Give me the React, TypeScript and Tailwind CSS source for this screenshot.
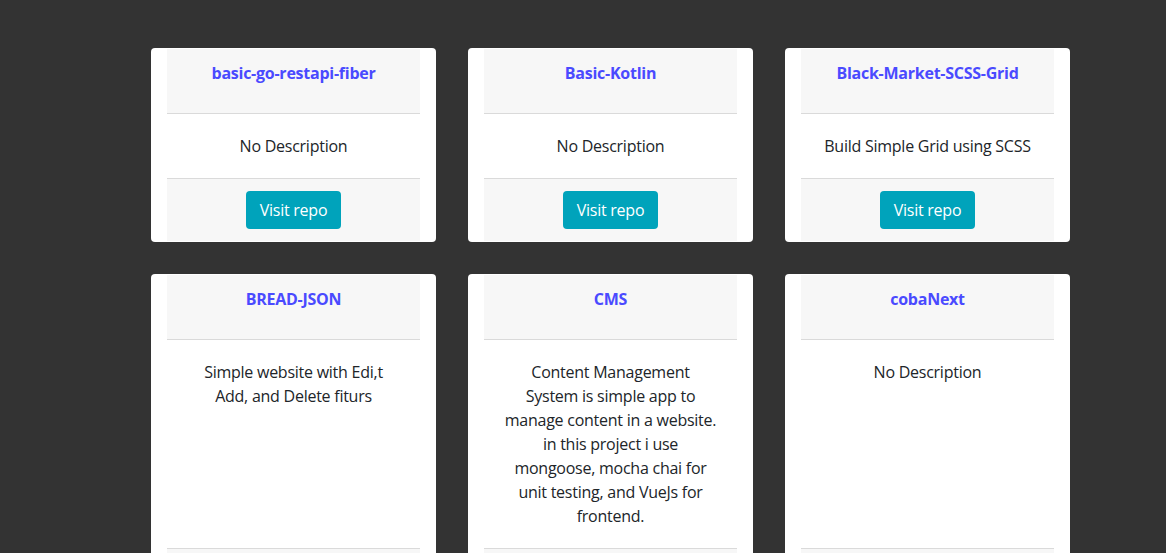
const repos = [
  { name: "basic-go-restapi-fiber", description: "No Description" },
  { name: "Basic-Kotlin", description: "No Description" },
  { name: "Black-Market-SCSS-Grid", description: "Build Simple Grid using SCSS" },
  { name: "BREAD-JSON", description: "Simple website with Edi,t Add, and Delete fiturs" },
  { name: "CMS", description: "Content Management System is simple app to manage content in a website. in this project i use mongoose, mocha chai for unit testing, and VueJs for frontend." },
  { name: "cobaNext", description: "No Description" },
];

function RepoCard({ name, description }: { name: string; description: string }) {
  return (
    <div className="flex flex-col rounded bg-white px-4 py-px">
      <div className="h-[65px] border-b border-[#dadada] bg-[#f7f7f7] pt-[12px] text-center">
        <h5 className="text-base leading-6 font-bold text-[#4a4aff]">{name}</h5>
      </div>
      <div className="flex-1 px-5 py-5 text-center text-base leading-6 text-[#212529]">
        {description}
      </div>
      <div className="flex justify-center border-t border-[#dadada] bg-[#f7f7f7] py-3">
        <a
          href="#"
          className="rounded bg-[#00a3bb] px-[14px] py-[7px] text-base leading-6 text-white"
        >
          Visit repo
        </a>
      </div>
    </div>
  );
}

export default function App() {
  return (
    <div className="min-h-[553px] bg-[#333333] pt-12 font-['Open_Sans',sans-serif] tracking-[-0.25px]">
      <div className="ml-[151px] grid w-[919px] grid-cols-3 gap-8">
        {repos.map((repo) => (
          <RepoCard key={repo.name} {...repo} />
        ))}
      </div>
    </div>
  );
}
